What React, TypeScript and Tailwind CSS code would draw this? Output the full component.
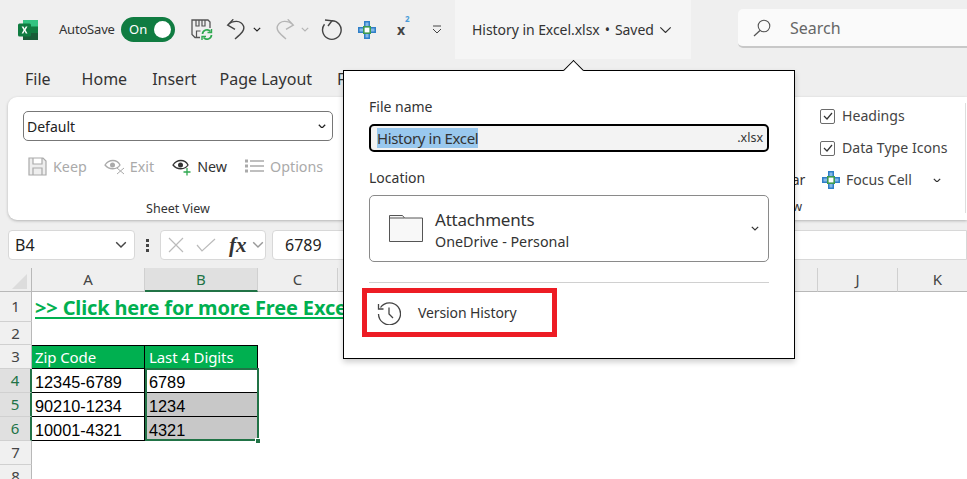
import React from "react";

const ui = "font-['Noto_Sans','Open_Sans',sans-serif]";

function ExcelLogo() {
  return (
    <svg width="20" height="20" viewBox="0 0 20 20">
      <rect x="5" y="0" width="15" height="7" fill="#33c481" />
      <rect x="5" y="6.5" width="7.5" height="7" fill="#21a366" />
      <rect x="12.5" y="6.5" width="7.5" height="7" fill="#107c41" />
      <rect x="5" y="13" width="15" height="7" fill="#185c37" />
      <rect x="0" y="3.5" width="13" height="13" rx="1.5" fill="#107c41" />
      <path d="M3.6 6.5h1.8l1.2 2.2 1.2-2.2h1.7l-2 3.4 2 3.5H7.8l-1.3-2.3-1.2 2.3H3.6l2-3.5z" fill="#fff" />
    </svg>
  );
}
function FocusIcon() {
  return (
    <svg width="18" height="18" viewBox="0 0 18 18">
      <path d="M6 0h6v6h6v6h-6v6H6v-6H0V6h6z" fill="#2f7fc8" />
      <path d="M7.5 1.5h3v4h-3zM7.5 12.5h3v4h-3zM1.5 7.5h4v3h-4zM12.5 7.5h4v3h-4z" fill="#85b9e8" />
      <rect x="5.8" y="5.8" width="6.4" height="6.4" fill="#fff" stroke="#3d9a50" strokeWidth="1.6" />
    </svg>
  );
}
function Chevron({ w = 9, c = "#444", sw = 1.2 }: { w?: number; c?: string; sw?: number }) {
  return (
    <svg width={w} height={w * 0.6} viewBox="0 0 10 6">
      <path d="M1 1l4 4 4-4" fill="none" stroke={c} strokeWidth={sw} />
    </svg>
  );
}
function SaveSync() {
  return (
    <svg width="22" height="21" viewBox="0 0 22 21">
      <path d="M9 18.500H4L1 15.500V1h16l2 2v6" fill="none" stroke="#555" strokeWidth="1.300" />
      <path d="M5 1v6h3V1M11 1v6h3V1M5.500 18v-6h4" fill="none" stroke="#555" strokeWidth="1.200" />
      <path d="M11.500 15a4.500 4.500 0 0 1 8-2.500M20.500 16a4.500 4.500 0 0 1-8 2.500" fill="none" stroke="#2ea84f" strokeWidth="1.700" />
      <path d="M16.500 13.500h4V10M15 17.500h-4v3.500" fill="none" stroke="#2ea84f" strokeWidth="1.400" />
    </svg>
  );
}
function Undo({ c, flip }: { c: string; flip?: boolean }) {
  return (
    <svg width="20" height="21" viewBox="0 0 20 21" className={flip ? "-scale-x-100" : ""}>
      <path d="M7.3 0.300L1.700 6 9 10.300M1.700 6C7 1 15 1 17.500 7 19 11 16 14 9 20" fill="none" stroke={c} strokeWidth="1.400" />
    </svg>
  );
}
function Check() {
  return (
    <span className="flex h-[15px] w-[15px] items-center justify-center rounded-[2px] border border-[#6b6b6b]">
      <svg width="10" height="8" viewBox="0 0 10 8">
        <path d="M1 4l3 3 5-6" fill="none" stroke="#333" strokeWidth="1.200" />
      </svg>
    </span>
  );
}

function ColHead({ label, w, active }: { label: string; w: string; active?: boolean }) {
  return (
    <div className={`${w} flex h-full shrink-0 items-center justify-center border-r border-[#d0d0d0] text-[15px] ${active ? "border-b-2 border-b-[#217346] bg-[#e0e0e0] text-[#217346]" : "border-b border-b-[#b8b8b8] text-[#444]"}`}>
      {label}
    </div>
  );
}

const rowHeights = ["h-[30px]", "h-[23px]", "h-[24px]", "h-[24px]", "h-[24px]", "h-[24px]", "h-[24px]", "h-[24px]"];

function RowHead({ n }: { n: number }) {
  const active = n >= 4 && n <= 6;
  return (
    <div className={`${rowHeights[n - 1]} flex w-[32px] shrink-0 items-center justify-center border-b border-r border-b-[#d0d0d0] text-[15px] ${active ? "border-r-2 border-r-[#217346] bg-[#e0e0e0] text-[#217346]" : "border-r-[#b8b8b8] bg-[#f0f0f0] text-[#444]"}`}>
      {n}
    </div>
  );
}

function DataRow({ n, a, b, grey }: { n: number; a: string; b: string; grey?: boolean }) {
  return (
    <div className="flex">
      <RowHead n={n} />
      <div className="flex h-[24px] w-[113px] items-center border-b border-r border-black pl-[3px] pt-[3px] font-['Liberation_Sans',sans-serif] text-[16.3px] text-black">{a}</div>
      <div className={`flex h-[24px] w-[113px] items-center border-b border-r border-black pl-[4px] pt-[3px] font-['Liberation_Sans',sans-serif] text-[16.3px] text-black ${grey ? "bg-[#c8c8c8]" : "bg-white"}`}>{b}</div>
    </div>
  );
}

export default function App() {
  return (
    <div className={`${ui} relative h-[479px] w-[967px] overflow-hidden bg-[#efefef] text-[#333]`}>
      {/* title bar */}
      <div className="flex h-[59px] items-center">
        <div className="ml-[18px]"><ExcelLogo /></div>
        <span className="ml-[21px] w-[54px] whitespace-nowrap text-[13px] tracking-[-0.2px]">AutoSave</span>
        <div className="ml-[8px] flex h-[25px] w-[54px] items-center justify-between rounded-full bg-[#107c41] pl-[8px] pr-[4px] text-[13px] text-white">
          On<span className="h-[17px] w-[17px] rounded-full bg-white" />
        </div>
        <div className="ml-[16px]"><SaveSync /></div>
        <div className="ml-[13px]"><Undo c="#444" /></div>
        <div className="ml-[7px]"><Chevron w={8} c="#222" sw={1.500} /></div>
        <div className="ml-[14px]"><Undo c="#b5b5b5" flip /></div>
        <div className="ml-[6px]"><Chevron w={8} c="#b5b5b5" sw={1.500} /></div>
        <svg className="ml-[12px]" width="22" height="22" viewBox="0 0 22 22">
          <path d="M11 1.700A9.300 9.300 0 1 1 3.500 5.300M4 1l7 .7-4 5.300" fill="none" stroke="#444" strokeWidth="1.400" />
        </svg>
        <div className="ml-[15px]"><FocusIcon /></div>
        <div className="ml-[21px] flex w-[20px] items-start text-[14px] font-bold leading-none text-[#444]">x<sup className="text-[8px] font-bold text-[#4a9bd8]">2</sup></div>
        <svg className="ml-[15px]" width="10" height="9" viewBox="0 0 10 9">
          <path d="M1 1h8M1 4l4 4 4-4" fill="none" stroke="#444" strokeWidth="1" />
        </svg>
        <div className="ml-[13px] flex h-full w-[236px] items-center gap-[5px] bg-[#f5f5f5] pl-[17px] text-[14px] tracking-[-0.05px]">
          <span className="whitespace-nowrap">History in Excel.xlsx</span>
          <span>•</span>
          <span>Saved</span>
          <Chevron w={13} c="#333" sw={0.9} />
        </div>
        <div className="mb-[2px] ml-[47px] flex h-[39px] flex-1 items-center gap-[19px] rounded-l-[5px] border-b-2 border-b-[#c8c8c8] bg-[#fafafa] pl-[15px] text-[16px] text-[#666]">
          <svg width="18" height="18" viewBox="0 0 18 18">
            <circle cx="11" cy="7" r="5.800" fill="none" stroke="#555" strokeWidth="1.100" />
            <path d="M7 11.500L1 17" fill="none" stroke="#555" strokeWidth="1.300" />
          </svg>
          Search
        </div>
      </div>

      {/* tabs */}
      <div className="flex h-[38px] items-center pt-[2px] text-[16px]">
        <span className="ml-[25px]">File</span>
        <span className="ml-[31px]">Home</span>
        <span className="ml-[25px]">Insert</span>
        <span className="ml-[23px]">Page Layout</span>
        <span className="ml-[25px]">Formulas</span>
      </div>

      {/* ribbon */}
      <div className="ml-[8px] flex h-[123px] rounded-l-[9px] bg-white shadow-[0_1px_3px_rgba(0,0,0,0.25)]">
        <div className="flex w-[335px] shrink-0 flex-col pl-[15px] pt-[14px]">
          <div className="flex h-[30px] w-[310px] items-center justify-between rounded-[5px] border border-[#777] pl-[3px] pr-[6px] text-[14px] text-[#222]">
            Default <Chevron w={8} c="#222" sw={1.600} />
          </div>
          <div className="mt-[15px] flex items-center text-[14.300px] text-[#aaa]">
            <svg className="ml-[5px] mr-[6px]" width="19" height="19" viewBox="0 0 19 19">
              <path d="M1 1h14l3 3v14H1zM5 1v6h9V1M5 18v-7h9v7" fill="#eee" stroke="#aaa" strokeWidth="1.200" />
            </svg>
            Keep
            <svg className="ml-[17px] mr-[4px]" width="22" height="17" viewBox="0 0 22 17">
              <path d="M1 7c4-6 12-6 15 0-3 5-11 5-15 0z" fill="none" stroke="#aaa" strokeWidth="1.300" />
              <circle cx="8.500" cy="7" r="2.500" fill="#aaa" />
              <path d="M13 10l7 6M20 10l-7 6" stroke="#aaa" strokeWidth="1" />
            </svg>
            Exit
            <svg className="ml-[18px] mr-[4px]" width="21" height="18" viewBox="0 0 21 18">
              <path d="M1 7c4-6 12-6 15 0-3 5-11 5-15 0z" fill="none" stroke="#333" strokeWidth="1.300" />
              <circle cx="8.500" cy="7" r="2.500" fill="#333" />
              <path d="M15 10v7.500M11.500 14h7" stroke="#2ea84f" strokeWidth="1.300" />
            </svg>
            <span className="text-[#333]">New</span>
            <svg className="ml-[18px] mr-[6px]" width="19" height="15" viewBox="0 0 19 15">
              <path d="M5 2h14M5 7h14M5 12h14" stroke="#aaa" strokeWidth="1.300" />
              <path d="M0 0.500h3v3H0zM0 5.500h3v3H0zM0 10.500h3v3H0z" fill="#aaa" />
            </svg>
            Options
          </div>
          <div className="mt-[23px] w-[310px] text-center text-[12.500px] text-[#333]">Sheet View</div>
        </div>
        <div className="flex w-[462px] shrink-0 flex-col items-end pt-[72px] text-[14px]">
          <span className="tracking-[-0.2px]">Formula Bar</span>
          <span className="mt-[8px] pr-[3px] text-[12.500px]">Show</span>
        </div>
        <div className="flex w-[160px] shrink-0 flex-col gap-[12px] pl-[15px] pt-[9px] text-[14.100px] text-[#444]">
          <div className="flex h-[20px] items-center gap-[7px]"><Check /> Headings</div>
          <div className="flex h-[20px] items-center gap-[7px]"><Check /> Data Type Icons</div>
          <div className="ml-[2px] flex h-[20px] items-center gap-[6px]">
            <FocusIcon /> Focus Cell <span className="ml-[15px]"><Chevron w={8} c="#333" sw={1.500} /></span>
          </div>
        </div>
        <div className="mt-[6px] h-[110px] w-px bg-[#ddd]" />
      </div>

      {/* formula bar */}
      <div className="mt-[10px] flex h-[30px] items-stretch pl-[8px] text-[16px] text-[#222]">
        <div className="flex w-[127px] items-center justify-between rounded-[4px] border border-[#d8d8d8] bg-white pl-[6px] pr-[7px]">
          B4 <Chevron w={12} c="#444" />
        </div>
        <div className="flex w-[25px] flex-col items-center justify-center gap-[2px]">
          <span className="h-[3px] w-[3px] bg-[#444]" />
          <span className="h-[3px] w-[3px] bg-[#444]" />
          <span className="h-[3px] w-[3px] bg-[#444]" />
        </div>
        <div className="flex w-[106px] items-center rounded-[4px] border border-[#d8d8d8] bg-white pl-[7px]">
          <svg width="16" height="16" viewBox="0 0 16 16"><path d="M1 1l14 14M15 1L1 15" stroke="#bbb" strokeWidth="1.200" /></svg>
          <svg className="ml-[12px]" width="20" height="14" viewBox="0 0 20 14"><path d="M1 7l5 6L19 1" fill="none" stroke="#bbb" strokeWidth="1.200" /></svg>
          <span className="ml-[13px] font-['Liberation_Serif',serif] text-[21px] font-bold italic leading-none text-[#333]">fx</span>
          <span className="ml-[5px]"><Chevron w={12} c="#999" /></span>
        </div>
        <div className="ml-[6px] flex flex-1 items-center rounded-l-[4px] border border-[#d8d8d8] bg-white pl-[12px]">6789</div>
      </div>

      {/* column headers */}
      <div className="mt-[8px] flex h-[24px]">
        <div className="flex w-[32px] shrink-0 items-end justify-end border-b border-r border-[#b8b8b8] pb-[2px] pr-[4px]">
          <div className="h-0 w-0 border-b-[15px] border-l-[15px] border-b-[#dcdcdc] border-l-transparent" />
        </div>
        <ColHead label="A" w="w-[113px]" />
        <ColHead label="B" w="w-[113px]" active />
        <ColHead label="C" w="w-[80px]" />
        <ColHead label="D" w="w-[80px]" />
        <ColHead label="E" w="w-[80px]" />
        <ColHead label="F" w="w-[80px]" />
        <ColHead label="G" w="w-[80px]" />
        <ColHead label="H" w="w-[80px]" />
        <ColHead label="I" w="w-[80px]" />
        <ColHead label="J" w="w-[80px]" />
        <ColHead label="K" w="w-[80px]" />
      </div>

      {/* sheet */}
      <div className="bg-white">
        <div className="flex">
          <RowHead n={1} />
          <div className="flex h-[30px] flex-1 items-center whitespace-nowrap pl-[3px] pt-[1px]">
            <span className="text-[20px] font-bold leading-[22px] text-[#00b050] underline decoration-[1.5px] underline-offset-[2px] tracking-[-0.15px]">&gt;&gt; Click here for more Free Excel Tips</span>
          </div>
        </div>
        <div className="flex"><RowHead n={2} /></div>
        <div className="flex">
          <RowHead n={3} />
          <div className="flex h-[24px] w-[113px] items-center border-y border-r border-black bg-[#00b050] pl-[3px] text-[15px] tracking-[-0.1px] text-white">Zip Code</div>
          <div className="flex h-[24px] w-[113px] items-center border-y border-r border-black bg-[#00b050] pl-[4px] text-[15px] tracking-[-0.1px] text-white">Last 4 Digits</div>
        </div>
        <div className="relative">
          <DataRow n={4} a="12345-6789" b="6789" />
          <DataRow n={5} a="90210-1234" b="1234" grey />
          <DataRow n={6} a="10001-4321" b="4321" grey />
          <div className="absolute left-[145px] top-[-1px] h-[73px] w-[114px] border-2 border-[#217346]" />
          <div className="absolute left-[255px] top-[69px] h-[6px] w-[6px] border border-white bg-[#217346]" />
        </div>
        <div className="flex"><RowHead n={7} /></div>
        <div className="flex"><RowHead n={8} /></div>
      </div>

      {/* file popover */}
      <div className="absolute left-[343px] top-[70px] flex h-[289px] w-[452px] flex-col border border-black bg-white pl-[25px] pr-[25px] shadow-[0_3px_6px_rgba(0,0,0,0.2)]">
        <div className="absolute left-[222px] top-[-8px] h-[15px] w-[15px] rotate-45 border-l border-t border-black bg-white" />
        <div className="absolute left-[215px] top-0 h-[8px] w-[29px] bg-white" />
        <div className="mt-[26px] text-[14px] leading-[20px]">File name</div>
        <div className="mt-[7px] flex h-[28px] items-center justify-between rounded-[5px] border-2 border-black bg-[#f3f3f3] pl-[6px] pr-[4px]">
          <span className="bg-[#99c8ee] text-[15px] leading-[20px] tracking-[-0.35px]">History in Excel</span>
          <span className="text-[12.500px]">.xlsx</span>
        </div>
        <div className="mt-[16px] text-[14px] leading-[20px]">Location</div>
        <div className="mt-[7px] flex h-[67px] items-center rounded-[5px] border border-[#8a8a8a] pl-[19px] pr-[9px]">
          <svg width="34" height="27" viewBox="0 0 34 27">
            <path d="M0.500 26.500V0.500h13l2 2.500h18v23.500z" fill="#f8f8f8" stroke="#555" />
            <path d="M0.500 3h15" stroke="#555" />
          </svg>
          <div className="ml-[12px] flex flex-1 flex-col pt-[2px]">
            <span className="text-[17px] leading-[24px] tracking-[-0.2px]">Attachments</span>
            <span className="text-[14.300px] leading-[20px]">OneDrive - Personal</span>
          </div>
          <Chevron w={8} c="#333" sw={1.500} />
        </div>
        <div className="mt-[20px] h-px bg-[#d0d0d0]" />
        <div className="ml-[-7px] mt-[5px] flex h-[49px] w-[195px] items-center border-[5px] border-[#ed1c24] pl-[10px] text-[14px] tracking-[-0.1px]">
          <svg width="24" height="24" viewBox="0 0 24 24">
            <path d="M3.500 6.500A11 11 0 1 1 1.500 13" fill="none" stroke="#444" strokeWidth="1.300" />
            <path d="M1.500 3v5h5M12 6.500v6.500l4 4" fill="none" stroke="#444" strokeWidth="1.300" />
          </svg>
          <span className="ml-[17px]">Version History</span>
        </div>
      </div>
    </div>
  );
}
